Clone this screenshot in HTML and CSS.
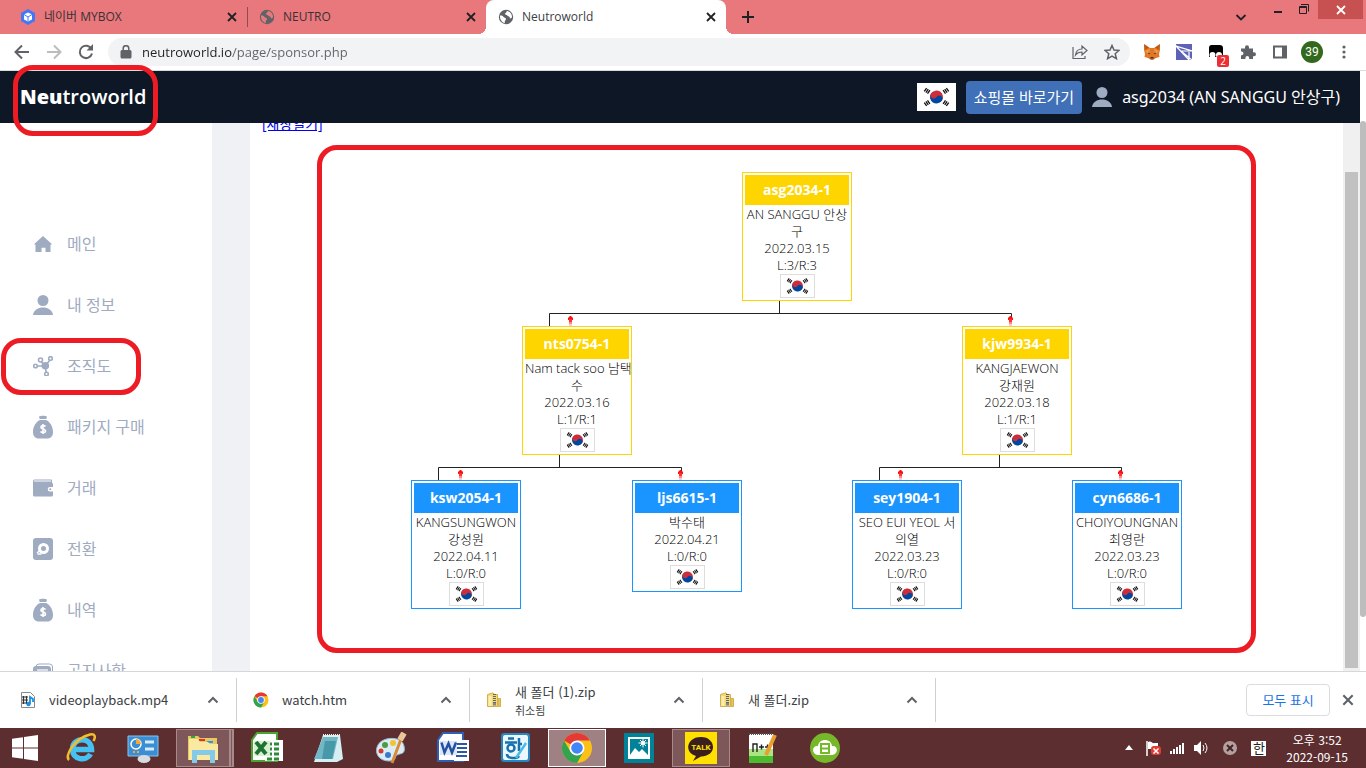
FILE: index.html
```html
<!DOCTYPE html>
<html lang="ko">
<head>
<meta charset="utf-8">
<title>Neutroworld</title>
<link rel="stylesheet" href="styles.css">
</head>
<body>
<svg class="defs" aria-hidden="true">
  <symbol id="bars" viewBox="0 0 36 24"><path stroke="#111" stroke-width="1.200" d="M6.700 6.900l2.200-3.200M8.200 7.900l2.200-3.200M9.700 8.900l2.200-3.200"/></symbol>
  <symbol id="flag" viewBox="0 0 36 24">
    <path fill="#fff" d="M0 0h36v24H0z"/>
    <g transform="rotate(33.7 18 12)">
      <path fill="#cd2e3a" d="M12 12a6 6 0 0 1 12 0z"/>
      <path fill="#0047a0" d="M12 12a6 6 0 0 0 12 0z"/>
      <circle cx="15" cy="12" r="3" fill="#cd2e3a"/>
      <circle cx="21" cy="12" r="3" fill="#0047a0"/>
    </g>
    <use href="#bars" width="36" height="24"/>
    <use href="#bars" width="36" height="24" transform="translate(36 0) scale(-1 1)"/>
    <use href="#bars" width="36" height="24" transform="translate(0 24) scale(1 -1)"/>
    <use href="#bars" width="36" height="24" transform="translate(36 24) scale(-1 -1)"/>
  </symbol>
  <symbol id="globe" viewBox="0 0 16 16">
    <circle cx="8" cy="8" r="7.200" fill="#5f6368"/>
    <path class="land" d="M2 6.500c2-.2 3 .3 3.500 1.500.5 1 2.500.6 2.500 2s-1.200 1.300-1.200 2.600V14C3.500 13.400 1.700 10 2 6.500zM9 2c-1 .8-.2 1.800-1.600 2.200-1 .4-.4 1.500.5 1.500 1.600 0 1.300 1.300 2.500 1.500 1.600.2 1 2 2.200 2.200.8 0 1.200-.5 1.400-1.300C14.200 5 12 2.300 9 2z"/>
  </symbol>
  <symbol id="close" viewBox="0 0 12 12"><path d="M2 2l8 8M10 2l-8 8" fill="none" stroke="currentColor" stroke-width="1.800"/></symbol>
  <symbol id="up" viewBox="0 0 12 12"><path d="M1.500 8.500L6 4l4.500 4.500" fill="none" stroke="currentColor" stroke-width="2"/></symbol>
  <symbol id="person" viewBox="0 0 20 20"><circle cx="10" cy="5.500" r="5.500" fill="currentColor"/><path d="M0 20c1-10 19-10 20 0z" fill="currentColor"/></symbol>
  <symbol id="bag" viewBox="0 0 20 24">
    <path fill="currentColor" d="M6 1.500C8 .5 12 .5 14 1.500L13.300 4H6.700zM7 5h6c4 1.800 7 6.500 7 12 0 4-2 6.500-6 6.500H6c-4 0-6-2.500-6-6.500C0 11.500 3 6.800 7 5z"/>
    <path fill="none" stroke="#fff" stroke-width="1.600" d="M12.500 11.500c-1-1.200-4.600-1.300-4.600.7 0 2.300 4.600 1.300 4.600 3.700 0 2-3.800 2-5 .6M10 9v10"/>
  </symbol>
  <symbol id="zip" viewBox="0 0 16 16">
    <path fill="#f4d873" stroke="#d0b050" d="M1.500 2.500L7 .8l1.500 1.700h3v12H1.500z"/>
    <path fill="#fbeeb0" d="M2.500 4h3v10h-3z"/><path fill="#e8c45c" stroke="#d0b050" d="M12 6.500h2.500v8H12z"/>
    <path stroke="#666" stroke-width="3" stroke-dasharray="1 1" d="M8.500 2v9"/><path fill="#888" d="M7 11h3v2.500H7z"/>
  </symbol>
  <symbol id="chrome" viewBox="0 0 32 32">
    <circle cx="16" cy="16" r="15" fill="#fbc116"/>
    <path fill="#e53935" d="M16 16L3 8.500A15 15 0 0 1 29 8.500H16z"/>
    <path fill="#34a34f" d="M3 8.500A15 15 0 0 0 16 31l6.500-11.200L16 16l-6.500 3.800z"/>
    <circle cx="16" cy="16" r="7.500" fill="#fff"/><circle cx="16" cy="16" r="5.800" fill="#4285f4"/>
  </symbol>
  <symbol id="arrow" viewBox="0 0 7 10"><path fill="#f11" d="M3 0h1l2 2v2H1V2z"/><path fill="#f33" d="M2 3h3v3H2z"/><path fill="#f88" d="M2 6h3v2H2z"/><path fill="#fcc" d="M2 8h3v2H2z"/></symbol>
</svg>

<header class="tabs">
  <div class="tab">
    <svg class="fav" viewBox="0 0 16 16"><path fill="#4377f5" d="M8 0l7 4v8l-7 4-7-4V4z"/><path fill="#fff" d="M8 3.500l4 2v5l-4 2-4-2v-5z"/><path d="M4 5.500L8 8l4-2.500M8 8v4" fill="none" stroke="#4377f5"/></svg>
    <span class="tab-name">네이버 MYBOX</span>
    <button class="bare" aria-label="탭 닫기"><svg class="x"><use href="#close"/></svg></button>
  </div>
  <div class="tab split">
    <svg class="fav pink"><use href="#globe"/></svg>
    <span class="tab-name">NEUTRO</span>
    <button class="bare" aria-label="탭 닫기"><svg class="x"><use href="#close"/></svg></button>
  </div>
  <div class="tab active">
    <svg class="fav"><use href="#globe"/></svg>
    <span class="tab-name">Neutroworld</span>
    <button class="bare" aria-label="탭 닫기"><svg class="x"><use href="#close"/></svg></button>
  </div>
  <button class="bare plus" aria-label="새 탭"><svg width="14" height="14" viewBox="0 0 14 14"><path d="M7 1v12M1 7h12" stroke="#202124" stroke-width="2"/></svg></button>
  <div class="window-controls">
    <button class="bare search-tabs" aria-label="탭 검색"><svg class="x" viewBox="0 0 12 12"><path d="M1.500 4L6 8.500 10.500 4" fill="none" stroke="#202124" stroke-width="1.800"/></svg></button>
    <button class="bare minimize" aria-label="최소화"><svg width="10" height="20" viewBox="0 0 10 20"><path d="M1 12h8" stroke="#202124" stroke-width="2"/></svg></button>
    <button class="bare restore" aria-label="이전 크기로"><svg width="10" height="18" viewBox="0 0 10 18"><path d="M.5 6.500h7v7h-7zM0 7.500h8M2 4.500h7.500v7" fill="none" stroke="#202124"/></svg></button>
    <button class="bare win-close" aria-label="닫기"><svg class="x"><use href="#close"/></svg></button>
  </div>
</header>

<nav class="toolbar">
  <button class="bare tool" aria-label="뒤로"><svg width="16" height="16" viewBox="0 0 16 16"><path d="M15 8H2M8 1.500L1.500 8 8 14.500" fill="none" stroke="#5f6368" stroke-width="2"/></svg></button>
  <button class="bare tool" aria-label="앞으로"><svg width="16" height="16" viewBox="0 0 16 16"><path d="M1 8h13M8 1.500L14.500 8 8 14.500" fill="none" stroke="#babcbe" stroke-width="2"/></svg></button>
  <button class="bare tool" aria-label="새로고침"><svg width="16" height="16" viewBox="0 0 16 16"><path d="M13.500 5A6.200 6.200 0 1 0 14 9.500" fill="none" stroke="#5f6368" stroke-width="2"/><path fill="#5f6368" d="M15 0v6.500H8.500z"/></svg></button>
  <div class="omnibox">
    <svg width="12" height="14" viewBox="0 0 12 14"><path fill="#5f6368" d="M2 5h8q1.500 0 1.500 1.500v5.500q0 1.500-1.500 1.500H2Q.5 13.500.5 12V6.500Q.5 5 2 5z"/><path d="M3.200 6V3.500a2.800 2.800 0 0 1 5.600 0V6" fill="none" stroke="#5f6368" stroke-width="1.500"/></svg>
    <input class="url" type="text" aria-label="주소창" value="neutroworld.io/page/sponsor.php">
    <button class="bare tool" aria-label="공유"><svg width="16" height="16" viewBox="0 0 16 16"><path d="M1 3v11.500h12V12M3.500 11C4 7 6.500 5 10 5V2l5 4.500-5 4.500V8C7 8 5 9 3.500 11z" fill="none" stroke="#5f6368" stroke-width="1.200"/></svg></button>
    <button class="bare tool" aria-label="북마크"><svg width="16" height="16" viewBox="0 0 16 16"><path d="M8 1.500l2 4.600 5 .4-3.800 3.300 1.200 4.900L8 12.100l-4.400 2.600 1.200-4.900L1 6.500l5-.4z" fill="none" stroke="#5f6368" stroke-width="1.500"/></svg></button>
  </div>
  <button class="bare tool" aria-label="MetaMask"><svg width="18" height="16" viewBox="0 0 18 16"><path fill="#e27625" d="M1 0l6 4h4l6-4v6l-1 4 .5 3-3.500 1-3 2H8l-3-2-3.500-1L2 10 1 6z"/><path fill="#f5963a" d="M2 7l5-2.500L6 11zM16 7l-5-2.500 1 6.500z"/><path fill="#7a3f1a" d="M1 0l5 3.500L2 6zM17 0l-5 3.500L16 6z" opacity=".45"/><path fill="#233447" d="M5 8.500l2.500 1.200-2 .5zM13 8.500l-2.500 1.200 2 .5zM7.500 13h3v1.500h-3z"/></svg></button>
  <button class="bare tool" aria-label="확장 프로그램"><svg width="16" height="16" viewBox="0 0 16 16"><path fill="#5b62b8" d="M0 0h16v16H0z"/><path d="M0 2l16 5M0 2l13 14M5 7l11 0M5 7l11 9M13 16V8" fill="none" stroke="#fff" stroke-width="1.200"/></svg></button>
  <button class="bare tool badge-host" aria-label="알림 2개"><svg width="16" height="16" viewBox="0 0 16 16"><path fill="#000" d="M3.500 1h8Q15 1 15 4v9H1V4q0-3 2.500-3z"/><circle cx="4.500" cy="11" r="3" fill="#fff"/><circle cx="11" cy="11" r="3" fill="#fff"/></svg><span class="badge">2</span></button>
  <button class="bare tool" aria-label="확장"><svg width="16" height="16" viewBox="0 0 16 16"><path fill="#5f6368" d="M1 4.500h4V3.300a2 2 0 0 1 4 0v1.200h4v3.800h1a2 2 0 0 1 0 4h-1V15H9.200v-1a1.900 1.900 0 0 0-3.800 0v1H1v-3.800h1a1.900 1.900 0 0 0 0-3.700H1z"/></svg></button>
  <button class="bare tool" aria-label="측면 패널"><svg width="16" height="16" viewBox="0 0 16 16"><path d="M2 2.500h12v11H2z" fill="none" stroke="#5f6368" stroke-width="2"/><path fill="#5f6368" d="M10 2h5v12h-5z"/></svg></button>
  <button class="bare tool" aria-label="프로필"><span class="avatar">39</span></button>
  <button class="bare tool" aria-label="메뉴"><svg width="4" height="16" viewBox="0 0 4 16"><g fill="#5f6368"><circle cx="2" cy="3" r="1.600"/><circle cx="2" cy="8" r="1.600"/><circle cx="2" cy="13" r="1.600"/></g></svg></button>
</nav>

<div class="page">
  <div class="site-bar">
    <a class="logo" href="#"><b>Neu</b>troworld</a>
    <div class="user">
      <svg class="flag-large"><use href="#flag"/></svg>
      <button class="shop">쇼핑몰 바로가기</button>
      <svg class="icon"><use href="#person"/></svg>
      <span class="user-name">asg2034 (AN SANGGU 안상구)</span>
    </div>
    <span class="mark mark-logo"></span>
  </div>

  <div class="body">
    <aside class="sidebar">
      <a href="#"><svg class="icon" viewBox="0 0 20 20"><path fill="currentColor" d="M10 2l9 8.200-1.500.6V18h-5v-4.200h-4V18h-6v-7.200L1 10.200z"/></svg>메인</a>
      <a href="#"><svg class="icon"><use href="#person"/></svg>내 정보</a>
      <a href="#"><svg class="icon" viewBox="0 0 20 20"><g stroke="currentColor" stroke-width="1.600" fill="none"><path d="M12 10L7.500 5M12 10l5-6M12 10l1.500 8M12 10H4"/><circle cx="7.500" cy="4" r="2" fill="#fff"/><circle cx="17.500" cy="2.500" r="1.800" fill="#fff"/><circle cx="2.500" cy="10" r="1.800" fill="#fff"/><circle cx="13.500" cy="18" r="1.800" fill="#fff"/></g><circle cx="12.300" cy="9.800" r="3.800" fill="currentColor"/></svg>조직도</a>
      <a href="#"><svg class="icon tall"><use href="#bag"/></svg>패키지 구매</a>
      <a href="#"><svg class="icon" viewBox="0 0 20 20"><path fill="currentColor" d="M0 3q0-1.500 1.500-1.500H18q1 0 1 1V5q1 0 1 1v3h-3a2.300 2.300 0 0 0 0 4.600h3V17q0 1.500-1.500 1.500h-17Q0 18.500 0 17z"/><path stroke="#fff" d="M1 3h17"/><circle cx="17.200" cy="11.300" r="1" fill="currentColor"/></svg>거래</a>
      <a href="#"><svg class="icon tall" viewBox="0 0 20 24"><rect y="1" width="20" height="22" rx="3" fill="currentColor"/><circle cx="10.500" cy="11.500" r="4" fill="none" stroke="#fff" stroke-width="3"/><path d="M4 16l3.500-3M4.500 17h4" stroke="#fff" stroke-width="1.600"/></svg>전환</a>
      <a href="#"><svg class="icon tall"><use href="#bag"/></svg>내역</a>
      <a href="#"><svg class="icon" viewBox="0 0 20 20"><rect x="3" y="3" width="16.500" height="13" rx="3" fill="none" stroke="currentColor"/><rect y="5" width="18" height="14" rx="3" fill="currentColor"/><path fill="#fff" opacity=".6" d="M4 8h11v2H4z"/></svg>공지사항</a>
      <span class="mark mark-menu"></span>
    </aside>

    <main class="panel">
      <a class="open" href="#">[새창열기]</a>
      <div class="tree">
        <svg class="lines" viewBox="0 0 771 440">
          <path fill="none" stroke="#222" d="M368.500 128v13M138.500 154v-12.500h462v4M148.500 282v13M27.500 308v-12.500h243v4M588.500 282v13M468.500 308v-12.500h242v4"/>
          <use href="#arrow" x="156" y="144" width="7" height="10"/>
          <use href="#arrow" x="596" y="144" width="7" height="10"/>
          <use href="#arrow" x="46" y="298" width="7" height="10"/>
          <use href="#arrow" x="266" y="298" width="7" height="10"/>
          <use href="#arrow" x="486" y="298" width="7" height="10"/>
          <use href="#arrow" x="706" y="298" width="7" height="10"/>
        </svg>
        <div class="node gold n1"><strong>asg2034-1</strong><p>AN SANGGU 안상<br>구</p><p>2022.03.15</p><p>L:3/R:3</p><svg class="flag"><use href="#flag"/></svg></div>
        <div class="node gold n2"><strong>nts0754-1</strong><p>Nam tack soo 남택<br>수</p><p>2022.03.16</p><p>L:1/R:1</p><svg class="flag"><use href="#flag"/></svg></div>
        <div class="node gold n3"><strong>kjw9934-1</strong><p>KANGJAEWON<br>강재원</p><p>2022.03.18</p><p>L:1/R:1</p><svg class="flag"><use href="#flag"/></svg></div>
        <div class="node n4"><strong>ksw2054-1</strong><p>KANGSUNGWON<br>강성원</p><p>2022.04.11</p><p>L:0/R:0</p><svg class="flag"><use href="#flag"/></svg></div>
        <div class="node n5"><strong>ljs6615-1</strong><p>박수태</p><p>2022.04.21</p><p>L:0/R:0</p><svg class="flag"><use href="#flag"/></svg></div>
        <div class="node n6"><strong>sey1904-1</strong><p>SEO EUI YEOL 서<br>의열</p><p>2022.03.23</p><p>L:0/R:0</p><svg class="flag"><use href="#flag"/></svg></div>
        <div class="node n7"><strong>cyn6686-1</strong><p>CHOIYOUNGNAN<br>최영란</p><p>2022.03.23</p><p>L:0/R:0</p><svg class="flag"><use href="#flag"/></svg></div>
        <span class="mark mark-tree"></span>
      </div>
    </main>
    <div class="scroll"><div class="scroll-thumb"></div></div>
  </div>
  <div class="page-scroll"></div>
</div>

<section class="downloads">
  <div class="download">
    <svg class="file" viewBox="0 0 16 16"><path fill="#fff" stroke="#888" d="M1.500.5h9l4 4v11h-13z"/><path stroke="#333" stroke-width="1.200" d="M2 5h6M2 8h6M2 11h5M3.500 4v8M6.500 4v8"/><path d="M10 12V5l3 2v3" fill="none" stroke="#1c8fe0" stroke-width="1.800"/><circle cx="8.500" cy="12" r="2.200" fill="#1c8fe0"/></svg>
    <div class="file-name">videoplayback.mp4</div><button class="bare" aria-label="옵션"><svg class="x"><use href="#up"/></svg></button>
  </div>
  <div class="download">
    <svg class="file"><use href="#chrome"/></svg>
    <div class="file-name">watch.htm</div><button class="bare" aria-label="옵션"><svg class="x"><use href="#up"/></svg></button>
  </div>
  <div class="download">
    <svg class="file"><use href="#zip"/></svg>
    <div class="file-name">새 폴더 (1).zip<small>취소됨</small></div><button class="bare" aria-label="옵션"><svg class="x"><use href="#up"/></svg></button>
  </div>
  <div class="download">
    <svg class="file"><use href="#zip"/></svg>
    <div class="file-name">새 폴더.zip</div><button class="bare" aria-label="옵션"><svg class="x"><use href="#up"/></svg></button>
  </div>
  <button class="show-all">모두 표시</button>
  <button class="bare" aria-label="닫기"><svg class="x big"><use href="#close"/></svg></button>
</section>

<footer class="taskbar">
  <button class="bare start" aria-label="시작"><svg width="26" height="26" viewBox="0 0 26 26"><path fill="#fff" d="M0 3.700l11-1.500v10.300H0zM12 2l14-2v12.500H12zM0 13.500h11v10.300L0 22.300zM12 13.500h14V26l-14-2z"/></svg></button>
  <button class="task" aria-label="Internet Explorer"><svg viewBox="0 0 32 32"><path fill="none" stroke="#45c1f2" stroke-width="5.500" d="M8 17.500h18.500C26 4 8 5 7.500 17c0 11.500 14 12.500 18 5"/><path d="M4 28C-1 24 10 6 25 2.500c5-1 6 2 3.500 6.500" fill="none" stroke="#f3bd2b" stroke-width="2.500"/></svg></button>
  <button class="task" aria-label="제어판"><svg viewBox="0 0 32 32"><path fill="#3b8ed4" stroke="#89c4ee" d="M1 4h30v20H1z"/><circle cx="9" cy="12" r="5" fill="none" stroke="#fff" stroke-width="1.500"/><path fill="#f4a83a" d="M9 12V7a5 5 0 0 1 5 5z"/><path stroke="#d5ecfb" stroke-width="3" d="M18 10h9M18 17h9"/><path stroke="#f4a83a" stroke-width="2" stroke-dasharray="2 2" d="M6 20h8"/><ellipse cx="17" cy="27" rx="6.500" ry="4" fill="#d8dbe0"/></svg></button>
  <button class="task open-app stack" aria-label="파일 탐색기"><svg viewBox="0 0 32 32"><path fill="#e9c860" d="M1 4h10l2 2h17v22H1z"/><path stroke="#28a745" stroke-width="2" d="M4 5h4"/><path stroke="#d33" stroke-width="2" d="M12 8h6"/><path stroke="#29f" stroke-width="2" d="M20 10h6"/><path fill="#fae9a0" d="M2 7h9l2 3h8l2 2h8v16H2z"/><path fill="none" stroke="#83c9e8" stroke-width="5" d="M7.500 31V20.500h18V31"/></svg></button>
  <button class="task" aria-label="Excel"><svg viewBox="0 0 32 32"><path fill="#fff" stroke="#4aa52e" stroke-width="2" d="M6 1h20v28H1V8z"/><path fill="#fff" d="M14 8h18v21H14z"/><path stroke="#2f8b3a" stroke-width="3" stroke-dasharray="5 2" d="M16 12h14M16 17h14M16 22h14M16 27h14"/><path fill="#d9efd2" d="M3 9h16v15H3z"/><path d="M5 10l10 12M15 10L5 22" stroke="#1c7430" stroke-width="4"/></svg></button>
  <button class="task" aria-label="메모장"><svg viewBox="0 0 32 32"><path fill="#d7eff2" d="M10 3h17l3 24-6 3H1z"/><path fill="#71b7c4" d="M10 5h15l-5 22H1z"/><path fill="#4798a8" d="M12 9h11l-4 18H9z"/><path stroke="#eee" stroke-width="3" stroke-dasharray="1 1" d="M10 3.500h17"/></svg></button>
  <button class="task" aria-label="그림판"><svg viewBox="0 0 32 32"><path fill="#dcecf6" stroke="#9ab9ce" d="M3 13C8 4 27 4 29 14c2 9-4 7-7 9s0 6-8 6C3 29-1 20 3 13z"/><circle cx="18" cy="11" r="3" fill="#f4c430"/><circle cx="10" cy="13" r="3" fill="#4a9e3f"/><circle cx="6" cy="19" r="2.500" fill="#d8392b"/><circle cx="13" cy="23" r="3" fill="#3979c6"/><path stroke="#d78b35" stroke-width="3" d="M17 31l9-24"/><path stroke="#e9c799" stroke-width="6" d="M25 8l4-7"/></svg></button>
  <button class="task" aria-label="Word"><svg viewBox="0 0 32 32"><path fill="#fff" stroke="#2f5fb4" stroke-width="2" d="M6 1h20v28H1V8z"/><path fill="#fff" d="M17 8h15v21H17z"/><path stroke="#2a58ab" stroke-width="2" d="M19 12h11M19 16h11M19 20h11M19 24h11"/><path fill="#dce8fa" d="M3 9h17v14H3z"/><path d="M4.500 10.500l3 10 4-9 3.500 9 4-10" fill="none" stroke="#2450a0" stroke-width="2.500"/></svg></button>
  <button class="task" aria-label="한글"><svg viewBox="0 0 32 32"><rect x="2" y="1" width="29" height="29" rx="3" fill="#2687c5"/><rect x="4" y="3" width="25" height="25" rx="2" fill="#eaf7fd"/><g fill="none" stroke="#1971ad" stroke-width="2.500"><path d="M9 6.500h6M6 10.500h12M20 6v13M20 12h3M8 22c0 5 10 5 12 2"/><circle cx="12" cy="16" r="3.500"/></g><path d="M17 26l10-15" stroke="#4bbbea" stroke-width="2.500"/></svg></button>
  <button class="task open-app current" aria-label="Chrome"><svg viewBox="0 0 32 32"><use href="#chrome"/></svg></button>
  <button class="task" aria-label="사진"><svg viewBox="0 0 32 32"><path fill="#008299" d="M1 1h30v30H1z"/><path fill="none" stroke="#fff" stroke-width="2" d="M6 6h20v20H6z"/><path fill="#fff" d="M7 23l5-7 4 4 3-3 6 6v2H7z"/><circle cx="20" cy="11" r="2" fill="#fff"/><path stroke="#fff" d="M20 6.500v9M15.500 11h9M17 8l6 6M23 8l-6 6"/></svg></button>
  <button class="task open-app" aria-label="카카오톡"><svg viewBox="0 0 32 32"><path fill="#fee100" d="M0 0h32v32H0z"/><path fill="#3b1e1e" d="M16 5c-15 0-17 16-5 19l-3 5 8-4.500C33 24 31 5 16 5z"/><text class="talk" x="16" y="18" text-anchor="middle">TALK</text></svg></button>
  <button class="task" aria-label="Notepad++"><svg viewBox="0 0 32 32"><path fill="#fff" d="M2 2h24v29H2z"/><path fill="#a9e583" d="M2 17h24v7H2z"/><path fill="#4cbb30" d="M2 24h24v7H2z"/><path stroke="#555" stroke-width="2" stroke-dasharray="1 1" d="M2 2h24"/><path d="M6 20v-8h4v8M12 15h5M14.500 12.500v5M18 15h5M20.500 12.500v5" fill="none" stroke="#222" stroke-width="1.400"/><path stroke="#e99e2d" stroke-width="4" d="M19 23l9-20"/></svg></button>
  <button class="task" aria-label="네이버 클라우드"><svg viewBox="0 0 32 32"><circle cx="16" cy="16" r="15" fill="#76b82a"/><path fill="#fff" d="M9 23c-7-1-6-10 0-9 1-8 13-8 14 0 6-1 7 8 0 9z"/><path d="M12 12h8v9h-8zM12 16.500h8" fill="none" stroke="#76b82a" stroke-width="2"/></svg></button>
  <div class="tray">
    <svg class="tray-more" width="8" height="6" viewBox="0 0 8 6"><path fill="#fff" d="M4 0l4 5H0z"/></svg>
    <svg width="16" height="16" viewBox="0 0 16 16"><path stroke="#fff" stroke-width="1.500" d="M2 1v15"/><path fill="#fff" d="M3 2c3-2 4 2 7 1h3v6H3z"/><rect x="6" y="6" width="10" height="9" rx="3" fill="#df3c35"/><path d="M8.500 8.500l5 5M13.500 8.500l-5 5" stroke="#fff" stroke-width="1.500"/></svg>
    <svg width="16" height="16" viewBox="0 0 16 16"><path fill="#fff" d="M1 11h2v3H1zM4 9h2v5H4zM7 7h2v7H7zM10 5h2v9h-2zM13 3h2v11h-2z"/></svg>
    <svg width="16" height="16" viewBox="0 0 16 16"><path fill="#fff" d="M1 5h3l4-4v14l-4-4H1z"/><path d="M10 5q2 3 0 6M12 3q4 5 0 10" fill="none" stroke="#fff"/></svg>
    <svg class="tray-off" width="16" height="16" viewBox="0 0 16 16"><circle cx="8" cy="8" r="7" fill="#b5a0a0"/><path d="M5 5l6 6M11 5l-6 6" stroke="#432424" stroke-width="2"/></svg>
    <span class="ime">한</span>
    <time class="clock">오후 3:52<br>2022-09-15</time>
  </div>
</footer>
</body>
</html>
```
FILE: styles.css
```css
* { box-sizing: border-box; }
body {
  margin: 0;
  height: 100vh;
  display: flex;
  flex-direction: column;
  overflow: hidden;
  background: #fff;
  color: #3c4043;
  font: 13px/16px "Open Sans", "Noto Sans CJK KR", sans-serif;
}
p { margin: 0; }
svg { display: block; flex: none; }
button, input { font: inherit; }
.defs { position: absolute; width: 0; height: 0; }
.bare {
  display: grid;
  place-items: center;
  flex: none;
  padding: 0;
  border: 0;
  background: none;
  color: inherit;
}
.x { width: 12px; height: 12px; }
.big { width: 14px; height: 14px; }

/* Tab strip */
.tabs {
  flex: none;
  display: flex;
  height: 34px;
  padding-left: 8px;
  background: #e8787c;
}
.tab {
  position: relative;
  display: flex;
  align-items: center;
  gap: 8px;
  width: 239px;
  padding: 0 9px 0 12px;
  color: #3c3034;
  font-size: 12px;
}
.tab .bare { color: #202124; }
.split::before {
  content: "";
  position: absolute;
  left: 0;
  width: 1px;
  height: 20px;
  background: #8c4c50;
}
.tab-name { flex: 1; }
.fav { width: 16px; height: 16px; }
.land { fill: var(--land, #fff); }
.pink { --land: #e8787c; }
.active {
  width: 240px;
  border-radius: 8px 8px 0 0;
  background: #fff;
  color: #3c4043;
}
.active::before, .active::after {
  content: "";
  position: absolute;
  bottom: 0;
  width: 8px;
  height: 8px;
}
.active::before { left: -8px; background: radial-gradient(circle at 0 0, transparent 8px, #fff 8px); }
.active::after { right: -8px; background: radial-gradient(circle at 100% 0, transparent 8px, #fff 8px); }
.plus { width: 44px; }
.window-controls {
  display: flex;
  align-items: flex-start;
  margin-left: auto;
  padding-right: 3px;
}
.search-tabs { height: 34px; margin-right: 26px; }
.minimize { margin-right: 16px; }
.restore { margin-right: 9px; }
.win-close { width: 45px; height: 19px; background: #c75050; color: #fff; }

/* Address bar */
.toolbar {
  flex: none;
  display: flex;
  align-items: center;
  height: 37px;
  padding: 0 6px;
  border-bottom: 1px solid #d8dcdc;
}
.tool { width: 32px; height: 28px; }
.omnibox {
  flex: 1;
  display: flex;
  align-items: center;
  height: 28px;
  margin: 0 6px;
  padding: 0 2px 0 12px;
  border-radius: 14px;
  background: #f1f3f4;
}
.url {
  flex: 1;
  min-width: 0;
  padding: 0 10px;
  border: 0;
  outline: 0;
  background: linear-gradient(90deg, #202124 100px, #5f6368 100px) text;
  color: transparent;
}
.badge-host { position: relative; }
.badge {
  position: absolute;
  right: 3px;
  bottom: -1px;
  width: 12px;
  height: 12px;
  border-radius: 2px;
  background: #ec2f35;
  color: #fff;
  font-size: 10px;
  line-height: 12px;
}
.avatar {
  width: 22px;
  height: 22px;
  border-radius: 50%;
  background: #33691e;
  color: #fff;
  font: 12px/22px Roboto, sans-serif;
}

/* Site */
.page {
  position: relative;
  flex: 1;
  min-height: 0;
  display: flex;
  flex-direction: column;
  padding-right: 6px;
}
.page-scroll {
  position: absolute;
  top: 50px;
  right: 0;
  bottom: 54px;
  width: 6px;
  border-radius: 3px;
  background: #bdbdbd;
}
.site-bar {
  position: relative;
  z-index: 1;
  flex: none;
  display: flex;
  align-items: center;
  justify-content: space-between;
  height: 52px;
  padding: 0 20px;
  background: #0e1726;
  color: #fff;
}
.logo {
  color: #fff;
  font-size: 20px;
  font-weight: 600;
  line-height: 28px;
  text-decoration: none;
}
.user { display: flex; align-items: center; gap: 10px; }
.flag-large { width: 39px; height: 28px; background: #fff; }
.shop {
  height: 33px;
  padding: 0 8px;
  border: 0;
  border-radius: 4px;
  background: #4070b8;
  color: #fff;
  font-size: 15px;
}
.user-name { font-family: "Noto Sans", "Noto Sans CJK KR", sans-serif; font-size: 16px; }
.icon { width: 20px; height: 20px; color: #9fabc1; }
.tall { height: 24px; }
.body { flex: 1; min-height: 0; display: flex; background: #f0f1f4; }
.sidebar {
  position: relative;
  width: 212px;
  margin-right: 38px;
  padding-top: 90px;
  overflow: hidden;
  background: #fff;
}
.sidebar a {
  display: flex;
  align-items: center;
  gap: 14px;
  height: 61px;
  padding-left: 33px;
  color: #9fabc1;
  font-size: 16px;
  text-decoration: none;
}
.panel { flex: 1; overflow: hidden; background: #fff; }
.open {
  display: block;
  margin: -7px 12px 40px;
  color: #00e;
  font-size: 14px;
}
.scroll { width: 17px; padding: 49px 2px 3px; background: #f0f0f0; }
.scroll-thumb { height: 100%; background: #c1c1c1; }

/* Hand-drawn highlight frames */
.mark {
  position: absolute;
  border: 5px solid #ed1c24;
  border-radius: 20px;
  pointer-events: none;
}
.mark-logo { left: 13px; top: -6px; width: 145px; height: 71px; }
.mark-menu { left: 1px; top: 215px; width: 140px; height: 57px; }
.mark-tree { left: -94px; top: -27px; width: 939px; height: 508px; }

/* Sponsor tree */
.tree { position: relative; width: 771px; height: 440px; margin: 0 auto; }
.lines { width: 771px; height: 440px; }
.node {
  position: absolute;
  width: 110px;
  padding: 2px;
  border: 1px solid #1a94ff;
  background: #fff;
  color: #000;
  line-height: 17px;
  text-align: center;
}
.node strong {
  display: block;
  margin-bottom: 1px;
  background: #1a94ff;
  color: #fff;
  font-size: 14px;
  line-height: 30px;
}
.node p { font-weight: 300; white-space: nowrap; }
.gold { border-color: #ffd500; }
.gold strong { background: #ffd500; }
.flag { width: 35px; height: 24px; margin: 0 auto; border: 1px solid #ddd; }
.n1 { left: 331px; top: 0; }
.n2 { left: 111px; top: 154px; }
.n3 { left: 551px; top: 154px; }
.n4 { left: 0; top: 308px; }
.n5 { left: 221px; top: 308px; }
.n6 { left: 441px; top: 308px; }
.n7 { left: 661px; top: 308px; }

/* Downloads shelf */
.downloads {
  flex: none;
  display: flex;
  align-items: center;
  height: 57px;
  padding: 0 11px 0 4px;
  border-top: 1px solid #d5d7da;
  color: #5f6368;
}
.download {
  display: flex;
  align-items: center;
  width: 233px;
  height: 44px;
  padding: 0 17px 0 16px;
  gap: 13px;
  border-right: 1px solid #d0d0d0;
}
.file { width: 16px; height: 16px; }
.file-name {
  flex: 1;
  color: #3c4043;
  font-family: "Noto Sans CJK KR", sans-serif;
  line-height: 20px;
}
.file-name small { display: block; font-size: 11px; line-height: 16px; }
.show-all {
  width: 84px;
  height: 32px;
  margin: 0 11px 0 auto;
  border: 1px solid #dadce0;
  border-radius: 4px;
  background: #fff;
  color: #1a73e8;
}

/* Taskbar */
.taskbar {
  flex: none;
  display: flex;
  height: 40px;
  background: #5c2e30;
  color: #fff;
}
.start { width: 50px; }
.task {
  display: grid;
  place-items: center;
  width: 58px;
  margin: 1px 2px;
  padding: 0;
  border: 1px solid transparent;
  background: none;
}
.task svg { width: 32px; height: 32px; }
.open-app { border-color: #a68a8c; background: #7d5759; }
.stack { border-right: 5px double #a68a8c; }
.current { border-color: #fff; background: #a08183; }
.talk { fill: #fee100; font: 700 8px Roboto, sans-serif; }
.tray {
  display: flex;
  align-items: center;
  gap: 8px;
  margin-left: auto;
  padding-right: 18px;
}
.tray-more { margin-right: 4px; }
.tray-off { margin: 0 5px; }
.ime {
  width: 15px;
  height: 15px;
  background: #fff;
  color: #222;
  font-size: 13px;
  line-height: 14px;
  text-align: center;
}
.clock {
  margin-left: 12px;
  font: 12px/17px "Noto Sans CJK KR", sans-serif;
  text-align: center;
}
```
